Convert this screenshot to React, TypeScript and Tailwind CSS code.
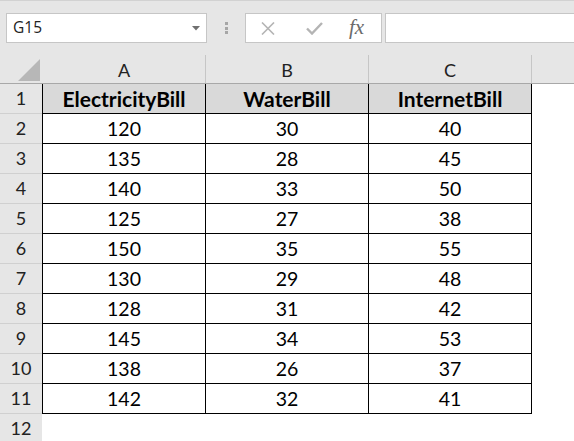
const rows: [number, number, number][] = [
  [120, 30, 40],
  [135, 28, 45],
  [140, 33, 50],
  [125, 27, 38],
  [150, 35, 55],
  [130, 29, 48],
  [128, 31, 42],
  [145, 34, 53],
  [138, 26, 37],
  [142, 32, 41],
];

const cellFont = { fontFamily: '"Lato", "Open Sans", sans-serif' };

function RowHead({ n }: { n: number }) {
  return (
    <div className="w-[42px] h-[30px] shrink-0 bg-[#e6e6e6] border-b border-[#d0d0d0] flex items-center justify-center text-[18px] text-[#222]">
      {n}
    </div>
  );
}

export default function App() {
  return (
    <div className="w-[574px] h-[441px] overflow-hidden bg-white" style={cellFont}>
      {/* formula bar */}
      <div className="h-[55px] bg-[#e6e6e6] border-t border-[#d2d2d2] flex items-start pt-[12px]">
        <div className="ml-[6px] w-[201px] h-[30px] bg-white border border-[#c6c6c6] flex items-center pl-[6px] pr-[6px]">
          <span className="text-[15.5px] text-[#222]" style={{ fontFamily: '"Open Sans", sans-serif' }}>
            G15
          </span>
          <svg className="ml-auto" width="8" height="5" viewBox="0 0 8 5">
            <path d="M0 0 H8 L4 4.5 Z" fill="#707070" />
          </svg>
        </div>
        <div className="w-[38px] h-[30px] flex flex-col items-center justify-center gap-[1.5px]">
          <div className="w-[3px] h-[3px] bg-[#a6a6a6]" />
          <div className="w-[3px] h-[3px] bg-[#a6a6a6]" />
          <div className="w-[3px] h-[3px] bg-[#a6a6a6]" />
        </div>
        <div className="w-[137px] h-[30px] bg-white border border-[#c6c6c6] flex items-center">
          <svg className="ml-[15px]" width="14" height="13" viewBox="0 0 14 13">
            <path d="M1 0.5 L13 12.5 M13 0.5 L1 12.5" stroke="#b4b4b4" strokeWidth="1.6" />
          </svg>
          <svg className="ml-[31px]" width="17" height="13" viewBox="0 0 17 13">
            <path d="M1 6.5 L6 11.5 L16 1" stroke="#b4b4b4" strokeWidth="2.4" fill="none" />
          </svg>
          <span
            className="ml-[26px] italic text-[21px] leading-none text-[#6b6b6b] -mt-[2px]"
            style={{ fontFamily: '"Liberation Serif", serif' }}
          >
            fx
          </span>
        </div>
        <div className="ml-[3px] flex-1 h-[30px] bg-white border border-[#c6c6c6] border-r-0" />
      </div>

      {/* column headers */}
      <div className="flex h-[29px] bg-[#e6e6e6] border-b border-[#a8a8a8]">
        <div className="w-[42px] h-full shrink-0 flex items-end justify-end pr-[2px] pb-[2px]">
          <svg width="22" height="22" viewBox="0 0 22 22">
            <path d="M22 0 V22 H0 Z" fill="#b7b7b7" />
          </svg>
        </div>
        <div className="w-[164px] shrink-0 border-l border-r border-[#c6c6c6] border-l-transparent flex items-center justify-center pt-[2px] text-[18px] text-[#222]">
          A
        </div>
        <div className="w-[163px] shrink-0 border-r border-[#c6c6c6] flex items-center justify-center pt-[2px] text-[18px] text-[#222]">
          B
        </div>
        <div className="w-[163px] shrink-0 border-r border-[#c6c6c6] flex items-center justify-center pt-[2px] text-[18px] text-[#222]">
          C
        </div>
      </div>

      {/* header row */}
      <div className="flex">
        <RowHead n={1} />
        <div className="w-[164px] h-[30px] shrink-0 bg-[#d9d9d9] border-l border-r border-b border-black flex items-center justify-center text-[21px] font-bold text-black">
          ElectricityBill
        </div>
        <div className="w-[163px] h-[30px] shrink-0 bg-[#d9d9d9] border-r border-b border-black flex items-center justify-center text-[21px] font-bold text-black">
          WaterBill
        </div>
        <div className="w-[163px] h-[30px] shrink-0 bg-[#d9d9d9] border-r border-b border-black flex items-center justify-center text-[21px] font-bold text-black">
          InternetBill
        </div>
      </div>

      {rows.map((r, i) => (
        <div key={i} className="flex">
          <RowHead n={i + 2} />
          <div className="w-[164px] h-[30px] shrink-0 border-l border-r border-b border-black flex items-center justify-center text-[19.5px] text-black">
            {r[0]}
          </div>
          <div className="w-[163px] h-[30px] shrink-0 border-r border-b border-black flex items-center justify-center text-[19.5px] text-black">
            {r[1]}
          </div>
          <div className="w-[163px] h-[30px] shrink-0 border-r border-b border-black flex items-center justify-center text-[19.5px] text-black">
            {r[2]}
          </div>
        </div>
      ))}

      <div className="flex">
        <RowHead n={12} />
      </div>
    </div>
  );
}
